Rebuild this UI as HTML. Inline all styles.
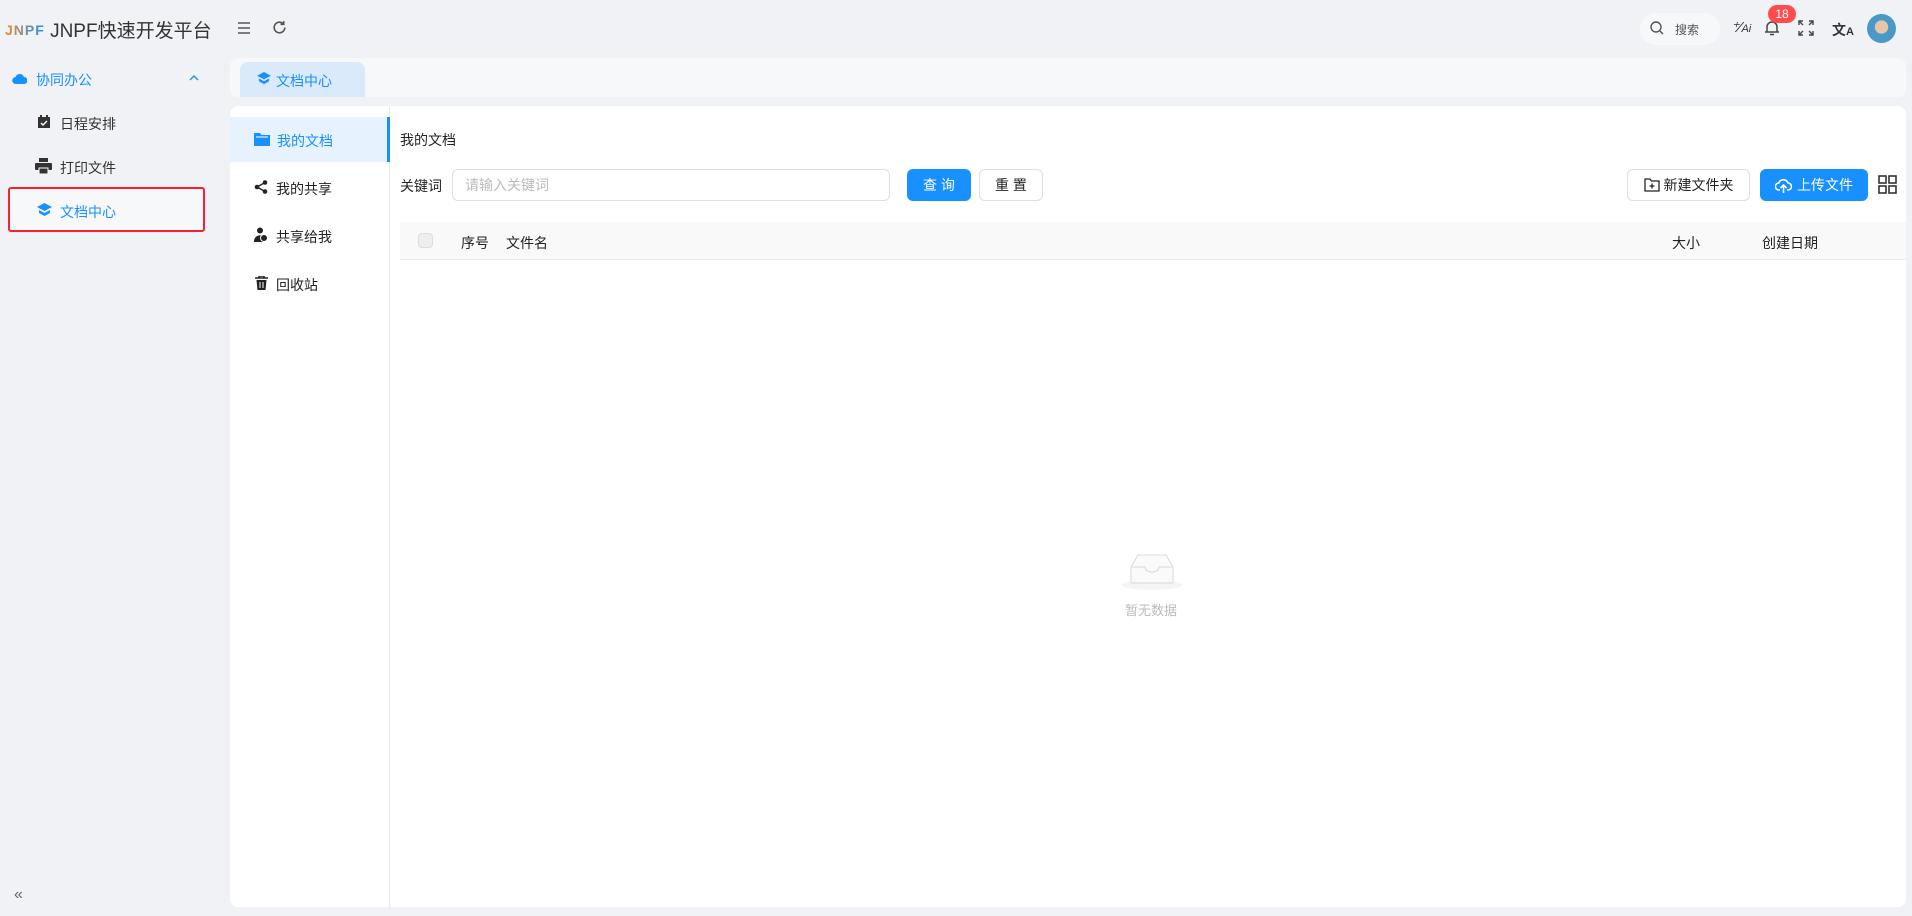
<!DOCTYPE html>
<html><head><meta charset="utf-8"><style>
*{box-sizing:border-box;margin:0;padding:0}
body{width:1912px;height:916px;background:#f0f2f5;font-family:"Liberation Sans","Noto Sans CJK SC",sans-serif;font-size:14px;color:#1f1f1f;position:relative;overflow:hidden}
.a{position:absolute}
.ic{position:absolute}
.btn{position:absolute;border-radius:6px;display:flex;align-items:center;justify-content:center;font-size:14px}
</style></head><body>
<!-- header -->
<div class="a" style="left:5px;top:16px;font-size:19px;color:#333;white-space:nowrap"><span style="font-weight:bold;font-size:14px;letter-spacing:1px;background:linear-gradient(90deg,#f08a24,#1890ff);-webkit-background-clip:text;color:transparent;vertical-align:2px">JNPF</span> JNPF快速开发平台</div>
<svg class="ic" style="left:236px;top:20px" width="16" height="16" viewBox="0 0 16 16"><path d="M2 3h12M2 8h12M2 13h12" stroke="#555" stroke-width="1.6"/></svg>
<svg class="ic" style="left:271px;top:19px" width="17" height="17" viewBox="0 0 16 16"><path d="M13 8a5 5 0 1 1-1.5-3.6M12 2v3h-3" stroke="#555" stroke-width="1.5" fill="none"/></svg>
<div class="a" style="left:1640px;top:13px;width:80px;height:32px;border-radius:16px;background:#f7f8fa"></div>
<svg class="ic" style="left:1649px;top:20px" width="16" height="16" viewBox="0 0 16 16"><circle cx="7" cy="7" r="5" stroke="#555" stroke-width="1.4" fill="none"/><path d="M11 11l3 3" stroke="#555" stroke-width="1.4"/></svg>
<div class="a" style="left:1675px;top:21px;font-size:12px;color:#555">搜索</div>
<div class="a" style="left:1731px;top:18px;font-size:15px;color:#333;font-style:italic">⁺⁄<span style="font-size:11px">Ai</span></div>
<svg class="ic" style="left:1763px;top:19px" width="18" height="18" viewBox="0 0 18 18"><path d="M4 13V8a5 5 0 0 1 10 0v5M2 13h14M7 15.5h4" stroke="#444" stroke-width="1.5" fill="none"/></svg>
<div class="a" style="left:1768px;top:5px;width:28px;height:18px;border-radius:9px;background:#ff4d4f;color:#fff;font-size:12px;text-align:center;line-height:18px">18</div>
<svg class="ic" style="left:1798px;top:20px" width="16" height="16" viewBox="0 0 16 16"><path d="M1 5V1h4M11 1h4v4M15 11v4h-4M5 15H1v-4M1 1l4 4M15 1l-4 4M15 15l-4-4M1 15l4-4" stroke="#444" stroke-width="1.4" fill="none"/></svg>
<div class="a" style="left:1832px;top:20px;font-size:14px;font-weight:bold;color:#333">文<span style="font-size:11px">A</span></div>
<div class="a" style="left:1867px;top:14px;width:29px;height:29px;border-radius:50%;background:radial-gradient(circle at 50% 45%,#e8c4a8 0 30%,#4a98c8 32%)"></div>
<!-- sidebar -->
<svg class="ic" style="left:12px;top:72px" width="15" height="13" viewBox="0 0 15 13"><path d="M4 12a3.5 3.5 0 0 1-.5-7A4.5 4.5 0 0 1 12 5a3.4 3.4 0 0 1 0 7z" fill="#1890ff"/></svg>
<div class="a" style="left:36px;top:70px;color:#1890ff">协同办公</div>
<svg class="ic" style="left:188px;top:73px" width="12" height="10" viewBox="0 0 12 10"><path d="M2 7l4-4 4 4" stroke="#1890ff" stroke-width="1.4" fill="none"/></svg>
<svg class="ic" style="left:37px;top:115px" width="14" height="14" viewBox="0 0 14 14"><rect x="1" y="2" width="12" height="11" fill="#333"/><path d="M4 0v3M10 0v3" stroke="#333" stroke-width="2"/><path d="M4 8l2 2 4-4" stroke="#fff" stroke-width="1.4" fill="none"/></svg>
<div class="a" style="left:60px;top:114px;color:#333">日程安排</div>
<svg class="ic" style="left:35px;top:158px" width="17" height="16" viewBox="0 0 17 16"><rect x="4" y="0" width="9" height="4" fill="#333"/><rect x="0" y="5" width="17" height="7" rx="1" fill="#333"/><rect x="4" y="10" width="9" height="6" fill="#333" stroke="#fff"/></svg>
<div class="a" style="left:60px;top:158px;color:#333">打印文件</div>
<div class="a" style="left:8px;top:187px;width:197px;height:45px;border:2.5px solid #f5222d;border-radius:3px;background:#f7f8fa"></div>
<svg class="ic" style="left:37px;top:203px" width="15" height="14" viewBox="0 0 15 14"><path d="M7.5 0L15 4l-7.5 4L0 4z" fill="#1890ff"/><path d="M2 7v3l5.5 3 5.5-3V7l-5.5 3z" fill="#1890ff"/></svg>
<div class="a" style="left:60px;top:202px;color:#1890ff">文档中心</div>
<div class="a" style="left:14px;top:886px;color:#666;font-size:16px">«</div>
<!-- tab bar -->
<div class="a" style="left:230px;top:58px;width:1676px;height:39px;background:#f7f8fa;border-radius:8px"></div>
<div class="a" style="left:240px;top:62px;width:125px;height:35px;background:#dbeafb;border-radius:8px 8px 0 0"></div>
<svg class="ic" style="left:257px;top:72px" width="14" height="13" viewBox="0 0 15 14"><path d="M7.5 0L15 4l-7.5 4L0 4z" fill="#1890ff"/><path d="M2 7v3l5.5 3 5.5-3V7l-5.5 3z" fill="#1890ff"/></svg>
<div class="a" style="left:276px;top:71px;color:#1890ff">文档中心</div>
<!-- main panel -->
<div class="a" style="left:230px;top:106px;width:1676px;height:801px;background:#fff;border-radius:8px"></div>
<div class="a" style="left:389px;top:106px;width:1px;height:801px;background:#e8e8e8"></div>
<div class="a" style="left:230px;top:117px;width:159px;height:45px;background:#e6f2fe"></div>
<div class="a" style="left:387px;top:117px;width:3px;height:45px;background:#1890ff"></div>
<svg class="ic" style="left:254px;top:132px" width="16" height="14" viewBox="0 0 16 14"><path d="M0 1h6l1.5 2H16v11H0z" fill="#1890ff"/><path d="M2 5h12" stroke="#fff" stroke-width="1"/></svg>
<div class="a" style="left:277px;top:131px;color:#1890ff">我的文档</div>
<svg class="ic" style="left:254px;top:180px" width="14" height="14" viewBox="0 0 14 14"><circle cx="11" cy="2.5" r="2.3" fill="#222"/><circle cx="3" cy="7" r="2.3" fill="#222"/><circle cx="11" cy="11.5" r="2.3" fill="#222"/><path d="M11 2.5L3 7l8 4.5" stroke="#222" stroke-width="1.4" fill="none"/></svg>
<div class="a" style="left:276px;top:179px;color:#222">我的共享</div>
<svg class="ic" style="left:254px;top:227px" width="14" height="15" viewBox="0 0 14 15"><circle cx="6" cy="3.5" r="3" fill="#222"/><path d="M0 14a6 6 0 0 1 9-5v6H0z" fill="#222"/><circle cx="10" cy="11" r="3.5" fill="#222" stroke="#fff"/></svg>
<div class="a" style="left:276px;top:227px;color:#222">共享给我</div>
<svg class="ic" style="left:255px;top:276px" width="13" height="14" viewBox="0 0 13 14"><path d="M0 2h13M4 2V0h5v2" stroke="#222" stroke-width="1.6" fill="none"/><path d="M1.5 4h10l-1 10h-8z" fill="#222"/><path d="M5 6v6M8 6v6" stroke="#fff"/></svg>
<div class="a" style="left:276px;top:275px;color:#222">回收站</div>
<div class="a" style="left:400px;top:130px;color:#222">我的文档</div>
<div class="a" style="left:400px;top:176px;color:#222">关键词</div>
<div class="a" style="left:452px;top:169px;width:438px;height:32px;border:1px solid #dcdfe6;border-radius:6px;padding-left:12px;line-height:30px;color:#bbb">请输入关键词</div>
<div class="btn" style="left:907px;top:169px;width:64px;height:32px;background:#1890ff;color:#fff">查 询</div>
<div class="btn" style="left:979px;top:169px;width:64px;height:32px;border:1px solid #dcdfe6;color:#222">重 置</div>
<div class="btn" style="left:1627px;top:169px;width:123px;height:32px;border:1px solid #dcdfe6;color:#222"><svg width="16" height="14" viewBox="0 0 16 14" style="margin-right:4px"><path d="M1 1h5l1.5 2H15v10H1z" stroke="#222" stroke-width="1.3" fill="none"/><path d="M8 5.5v5M5.5 8h5" stroke="#222" stroke-width="1.3"/></svg>新建文件夹</div>
<div class="btn" style="left:1760px;top:169px;width:108px;height:32px;background:#1890ff;color:#fff"><svg width="17" height="15" viewBox="0 0 17 15" style="margin-right:5px"><path d="M5 12H4a3.5 3.5 0 0 1-.3-7A5 5 0 0 1 13 5a3.4 3.4 0 0 1 0 7h-1" stroke="#fff" stroke-width="1.6" fill="none"/><path d="M8.5 15V7M5.5 10l3-3 3 3" stroke="#fff" stroke-width="1.6" fill="none"/></svg>上传文件</div>
<svg class="ic" style="left:1878px;top:175px" width="19" height="19" viewBox="0 0 19 19"><g stroke="#333" stroke-width="1.6" fill="none"><rect x="1" y="1" width="7" height="7"/><rect x="11" y="1" width="7" height="7"/><rect x="1" y="11" width="7" height="7"/><rect x="11" y="11" width="7" height="7"/></g></svg>
<div class="a" style="left:400px;top:222px;width:1506px;height:38px;background:#f9f9f9;border-bottom:1px solid #ececec"></div>
<div class="a" style="left:418px;top:233px;width:15px;height:15px;border:1px solid #ddd;border-radius:4px;background:#eee"></div>
<div class="a" style="left:461px;top:233px;color:#222">序号</div>
<div class="a" style="left:506px;top:233px;color:#222">文件名</div>
<div class="a" style="left:1672px;top:233px;color:#222">大小</div>
<div class="a" style="left:1762px;top:233px;color:#222">创建日期</div>
<svg class="ic" style="left:1121px;top:549px" width="62" height="42" viewBox="0 0 62 42"><ellipse cx="31" cy="36" rx="30" ry="5" fill="#f5f5f5"/><path d="M10 18l7-12h28l7 12v16H10z" fill="#fafafa" stroke="#d9d9d9"/><path d="M10 18h14a7 5 0 0 0 14 0h14" stroke="#d9d9d9" fill="none"/></svg>
<div class="a" style="left:1125px;top:600px;color:#bbb;font-size:13px">暂无数据</div>
</body></html>
